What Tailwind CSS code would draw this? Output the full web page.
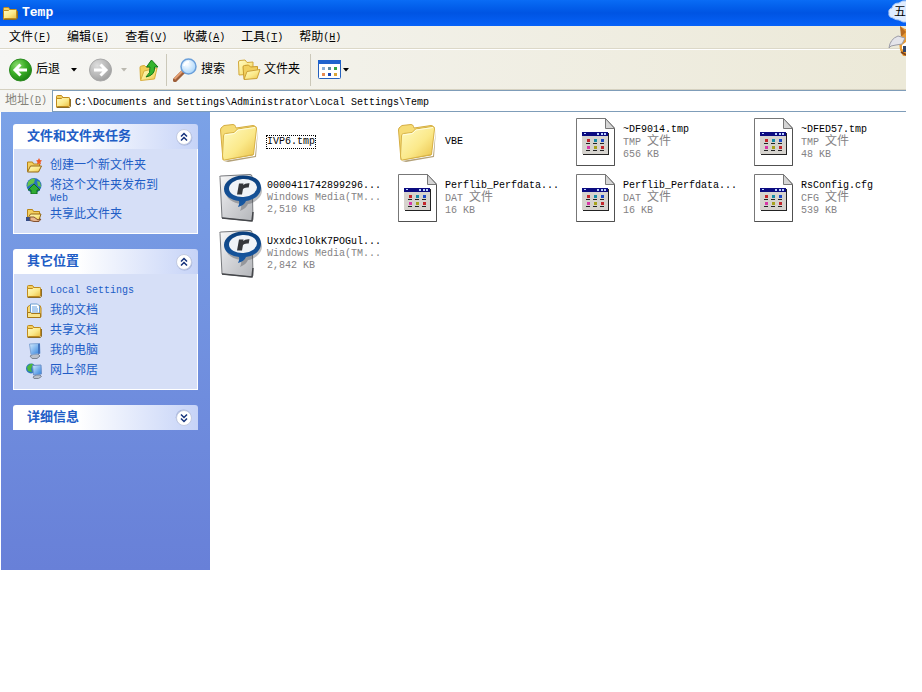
<!DOCTYPE html>
<html lang="zh-CN">
<head>
<meta charset="utf-8">
<meta name="viewport" content="width=device-width, initial-scale=1">
<title>Temp</title>
<script src="https://cdn.jsdelivr.net/npm/@tailwindcss/browser@4"></script>
</head>
<body class="min-h-screen bg-white pr-4 font-['Liberation_Mono','Noto_Sans_CJK_SC',monospace] text-[12px] leading-3 text-black">

<svg class="absolute size-0" aria-hidden="true">
  <defs>
    <linearGradient id="gFolder" x1="0" y1="0" x2="1" y2="1"><stop offset="0" stop-color="#fffbc4"/><stop offset=".55" stop-color="#fbe98a"/><stop offset="1" stop-color="#e9bf45"/></linearGradient>
    <linearGradient id="gPage" x1="0" y1="0" x2="1" y2="1"><stop offset="0" stop-color="#fafafa"/><stop offset=".4" stop-color="#d8d9dc"/><stop offset="1" stop-color="#b4b6ba"/></linearGradient>
    <radialGradient id="gGreen" cx=".35" cy=".3" r=".8"><stop offset="0" stop-color="#8ddc70"/><stop offset=".5" stop-color="#3aad26"/><stop offset="1" stop-color="#167a10"/></radialGradient>
    <radialGradient id="gGrey" cx=".35" cy=".3" r=".8"><stop offset="0" stop-color="#dedede"/><stop offset=".6" stop-color="#b5b5b5"/><stop offset="1" stop-color="#989898"/></radialGradient>
    <radialGradient id="gLens" cx=".4" cy=".35" r=".7"><stop offset="0" stop-color="#fff"/><stop offset="1" stop-color="#a3d3fb"/></radialGradient>
    <linearGradient id="gRing" x1="0" y1="0" x2="0" y2="1"><stop offset="0" stop-color="#0b3f7c"/><stop offset="1" stop-color="#1a5ba6"/></linearGradient>
    <linearGradient id="gScreen" x1="0" y1="0" x2="1" y2="1"><stop offset="0" stop-color="#d5ecff"/><stop offset="1" stop-color="#2b7fdc"/></linearGradient>

    <symbol id="folder16" viewBox="0 0 16 16">
      <path d="M1.500 14.500V3.500q0-1 1-1h4l1.500 2h5.500q1 0 1 1v2" fill="#f3cf60" stroke="#c08a1c"/>
      <path d="M2 14.500h12.500l1-1V6" fill="none" stroke="#8a6c2a"/>
      <path d="M1.500 5.500h5l1-1h6q1 0 1 1v7.500q0 .5-1 .5h-11q-1 0-1-1z" fill="url(#gFolder)" stroke="#c08a1c"/>
    </symbol>
    <symbol id="bigFolder" viewBox="0 0 44 48">
      <path d="M5 43l31-5 3-27-2 28-28 5z" fill="#806220" opacity=".6"/>
      <path d="M1.500 12L2 10 5 7.500l9-1q2 0 2.500 2l.5 1.500 17-2.500q2.500 0 2.500 2L34 37 4 42z" fill="#f6dc76" stroke="#d5ad42"/>
      <path d="M4.500 18q0-2 2-2.500l8.500-1 3.500-3.500 17-2.500q2.500 0 2 2.500L34.500 36.500 5.500 42q-2-.5-2-4z" fill="url(#gFolder)" stroke="#d7b246"/>
      <path d="M5.500 17l10-1.500L19 12l17-2.500" fill="none" stroke="#fffde0"/>
    </symbol>
    <symbol id="doc" viewBox="0 0 44 48">
      <path d="M1.500.5h29l9 9.500v37.500h-38z" fill="#fff" stroke="#777"/>
      <path d="M39.500 10v37.500h-38" fill="none" stroke="#505050"/>
      <path d="M30.500.5v10h9z" fill="#d5d5d5" stroke="#777"/>
      <path d="M8 15h26v22H8z" fill="#222"/>
      <path d="M7 14h26v22H7z" fill="#d6d3ce"/>
      <path d="M7 14h26v4H7z" fill="#0b0b80"/>
      <path d="M22 15h2v2h-2zM26 15h2v2h-2zM29 15h2v2h-2zM9 15h2v1H9z" fill="#bcd2ff"/>
      <path d="M11 25.500h4M18 25.500h4M25 25.500h4M11 32.500h4M18 32.500h4M25 32.500h4" stroke="#222"/>
      <path d="M12 21h3v3h-3zM26 28h3v3h-3z" fill="#c3262b"/><path d="M19 21h3v3h-3z" fill="#168ba5"/><path d="M26 21h3v3h-3z" fill="#1a49c8"/><path d="M12 28h3v3h-3z" fill="#d837a7"/><path d="M19 28h3v3h-3z" fill="#a6a21d"/>
    </symbol>
    <symbol id="media" viewBox="0 0 44 48">
      <path d="M1 3.500Q0 2 2 2L31 .5q2 0 2 2L34 45q0 2-2 2L3 44z" fill="url(#gPage)" stroke="#77797d"/>
      <path d="M3 44l30 3 1-9" fill="none" stroke="#45474b" stroke-width="1.500"/>
      <path d="M24 2.500C35 2 42 7 42 14.500S34 27 28 28c-1 3-4 5-8 7 1-2 1.500-4 1-7C13 27 6 23 6 16S13 3 24 2.500z" fill="#3b3f46" opacity=".35" transform="translate(1 2)"/>
      <path d="M24 1.500C35 1.500 42 6 42 13.500S35 26 27 27c-1 3-4 5-8 6 1-2 1.500-3.500 1-6C12 26 5 22 5 15S13 1.500 24 1.500z" fill="url(#gRing)"/>
      <ellipse cx="24" cy="14" rx="14" ry="9" fill="#f0f3f7" transform="rotate(-4 24 14)"/>
      <path d="M18 20.500l2-11h4.500l-.3 1.500Q26 9 30.500 9.300l-.8 4.200q-4.500-.5-5.700 1.500l-1 5.500z" fill="#35373b"/>
    </symbol>
    <symbol id="chev" viewBox="0 0 18 18">
      <circle cx="9.500" cy="9.800" r="7.800" fill="#7d8fc0" opacity=".5"/>
      <circle cx="9" cy="9" r="7.500" fill="#fff" stroke="#c3cbe2"/>
      <path d="M6 8.500l3-3 3 3M6 12.500l3-3 3 3" fill="none" stroke="#16337c" stroke-width="1.500"/>
    </symbol>
  </defs>
</svg>

<div class="relative overflow-hidden">
  <header>
    <div class="flex h-[26px] items-center gap-1 bg-linear-to-b from-[#0a6cf5] via-[#0054e3] to-[#0762f8] pl-[2px] text-white">
      <svg class="size-4"><use href="#folder16"/></svg>
      <h1 class="text-[13px] font-bold leading-4">Temp</h1>
    </div>
    <div class="bg-linear-to-r from-[#f6f6f4] to-[#ece9d8]">
      <nav aria-label="菜单" class="flex h-[23px] items-center gap-4 border-b border-[#dcd8c8] pl-[9px] pt-[2px]">
        <button type="button" class="flex items-center">文件<span class="text-[10px]">(<u>F</u>)</span></button>
        <button type="button" class="flex items-center">编辑<span class="text-[10px]">(<u>E</u>)</span></button>
        <button type="button" class="flex items-center">查看<span class="text-[10px]">(<u>V</u>)</span></button>
        <button type="button" class="flex items-center">收藏<span class="text-[10px]">(<u>A</u>)</span></button>
        <button type="button" class="flex items-center">工具<span class="text-[10px]">(<u>T</u>)</span></button>
        <button type="button" class="flex items-center">帮助<span class="text-[10px]">(<u>H</u>)</span></button>
      </nav>
      <div role="toolbar" aria-label="标准按钮" class="flex h-10 items-center border-t border-white pl-2">
        <button type="button" class="flex items-center gap-1">
          <svg class="size-6" viewBox="0 0 24 24"><circle cx="12.500" cy="12" r="11" fill="url(#gGreen)" stroke="#2d8a22"/><path d="M19 12H8M12.500 6.500L7 12l5.500 5.500" fill="none" stroke="#fff" stroke-width="3"/></svg>
          <span>后退</span>
        </button>
        <button type="button" aria-label="后退历史" class="flex w-[28px] justify-center"><svg class="h-1 w-2" viewBox="0 0 8 4"><path d="M1 0h6L4 3.500z"/></svg></button>
        <button type="button" aria-label="前进" disabled><svg class="size-6" viewBox="0 0 24 24"><circle cx="12.500" cy="12" r="11" fill="url(#gGrey)" stroke="#a9a9a9"/><path d="M6 12h11M12.500 6.500L18 12l-5.500 5.500" fill="none" stroke="#fff" stroke-width="3"/></svg></button>
        <button type="button" aria-label="前进历史" disabled class="flex w-6 justify-center"><svg class="h-1 w-2" viewBox="0 0 8 4"><path d="M1 0h6L4 3.500z" fill="#bbb9b0"/></svg></button>
        <button type="button" aria-label="向上" class="pl-px">
          <svg class="size-6" viewBox="0 0 24 24"><path d="M3.500 21.500l-.5-12q0-1.500 1.500-1.500l3-.5 2 2 7-1 .5 10z" fill="#f2cf58" stroke="#d5a832"/><path d="M3.500 22.500L7 13l13-3-2.500 11z" fill="url(#gFolder)" stroke="#d9ae3d"/><path d="M9 19q5-4 4-10H9.500L14.500 2l6.500 7h-3.500q1 8-8.500 10z" fill="#35b52e" stroke="#15781a"/></svg>
        </button>
        <span class="ml-[5px] mr-[6px] h-8 w-px bg-[#cbc8b9]"></span>
        <button type="button" class="flex items-center gap-1">
          <svg class="size-6" viewBox="0 0 24 24"><path d="M2 22l8-8" stroke="#9e5f3a" stroke-width="4.500" stroke-linecap="round"/><path d="M1.500 21l8-8" stroke="#e49e70" stroke-width="2"/><circle cx="15.500" cy="8.500" r="7.500" fill="url(#gLens)" stroke="#6b9fd9" stroke-width="1.500"/><path d="M11 8q1-4 5-4" fill="none" stroke="#fff" stroke-width="2"/></svg>
          <span>搜索</span>
        </button>
        <button type="button" class="ml-3 flex items-center gap-[3px]">
          <svg class="size-6" viewBox="0 0 24 24"><path d="M2 17L1.500 4q0-1.500 1.500-1.500l5-.5 2 2.500 6-.5V16z" fill="url(#gFolder)" stroke="#d2a83b"/><path d="M7 21L6 9q0-1.500 1.500-1.500l4-.5 2 2 7-.5V11l-2 9z" fill="#f1cf5d" stroke="#c99b2c"/><path d="M7 21.500l3-8 13-2-3 9z" fill="url(#gFolder)" stroke="#cda136"/></svg>
          <span>文件夹</span>
        </button>
        <span class="ml-[10px] mr-[7px] h-8 w-px bg-[#cbc8b9]"></span>
        <button type="button" aria-label="查看方式" class="flex items-center">
          <svg class="h-5 w-6" viewBox="0 0 24 20"><rect x=".5" y=".5" width="22" height="18" rx="1" fill="#fff" stroke="#2460bd"/><path d="M0 0h23v4H0z" fill="#1f63cd"/><path d="M4 7h3v3H4z" fill="#8ab0d8"/><path d="M10 7h3v3h-3z" fill="#608da2"/><path d="M16 7h3v3h-3z" fill="#34a542"/><path d="M4 13h3v3H4z" fill="#e68a51"/><path d="M10 13h3v3h-3z" fill="#1946b5"/><path d="M16 13h3v3h-3z" fill="#dba638"/></svg>
          <svg class="h-1 w-2" viewBox="0 0 8 4"><path d="M1 0h6L4 3.500z"/></svg>
        </button>
      </div>
      <form class="flex h-[23px] items-stretch border-t border-[#d5d1c0] pl-[5px]" onsubmit="return false">
        <label for="address" class="flex w-[47px] items-center text-[#858379]">地址<span class="text-[10px]">(<u>D</u>)</span></label>
        <div class="flex flex-1 items-center gap-1 border border-r-0 border-[#7f9db9] bg-white pl-[2px]">
          <svg class="size-4"><use href="#folder16"/></svg>
          <input id="address" type="text" class="min-w-0 flex-1 bg-transparent pt-[3px] text-[10px] leading-3 outline-none" value="C:\Documents and Settings\Administrator\Local Settings\Temp">
        </div>
      </form>
    </div>
  </header>

  <div class="absolute right-0 top-0 h-14 w-[18px] overflow-hidden">
    <svg class="absolute inset-0 h-14 w-[30px]" viewBox="0 0 30 56" aria-hidden="true">
      <path d="M5 18Q0 17 1 13q-1-4 3-5 1-5 7-5 3-3 8-2h11v21H15l-4-2q-4 0-6-2z" fill="#dfecff" stroke="#a4c4f4"/>
      <path d="M12 26l5 3h13v27H15l-3-6-1-8 3-5z" fill="#e99b34"/><path d="M12 26l6 6-5 5z" fill="#b96c22"/>
      <path d="M1 48q1-9 9-12l7 2-3 6-6 1-5 1z" fill="#e4e4ea" stroke="#9b9ba6"/>
      <path d="M14 45l4-3v9l-4-2z" fill="#fff"/><path d="M15 46h3v6h-3z" fill="#2f466d"/><path d="M13 52l5 3" stroke="#7d421a" stroke-width="2"/>
    </svg>
    <span class="absolute left-[6px] top-[7px]">五</span>
  </div>

  <div class="flex items-start">
    <aside class="ml-px flex min-h-[458px] w-[209px] shrink-0 flex-col gap-[15px] bg-linear-to-b from-[#7ba2e7] to-[#6880d8] px-3 pt-3 text-[#215dc6]">
      <section>
        <h2 class="flex h-[25px] items-center justify-between rounded-t-[3px] bg-linear-to-r from-white from-35% to-[#c6d3f7] pl-[14px] pr-[5px] text-[13px] font-bold">文件和文件夹任务<button type="button" aria-label="折叠"><svg class="size-[18px]"><use href="#chev"/></svg></button></h2>
        <ul class="flex flex-col gap-2 border border-t-0 border-white bg-[#d6dff7] px-3 pb-3 pt-[11px]">
          <li><a href="#" class="flex gap-2"><svg class="-my-[2px] size-4 shrink-0" viewBox="0 0 16 16"><path d="M1.500 13V4h5l1 2h6v3" fill="#f3cf60" stroke="#b98417"/><path d="M1.500 14l3-6h11l-3 6z" fill="url(#gFolder)" stroke="#946817"/><path d="M13 0l1 2 2 .5-1.500 1.500.5 2.500-2-1-2 1 .5-2.500L10 2.500l2-.5z" fill="#ee5a24"/></svg>创建一个新文件夹</a></li>
          <li><a href="#" class="flex gap-2"><svg class="-my-[2px] size-4 shrink-0" viewBox="0 0 16 16"><circle cx="8" cy="7.500" r="7.500" fill="#2771bd"/><path d="M2 4q4-5 7-3l-1 4-4 2-3 2zM11 3l3 1 1 5-3-1z" fill="#64c34a"/><path d="M8 6l6 6h-3v4H5v-4H2z" fill="#2fac34" stroke="#126b1e"/></svg><span>将这个文件夹发布到<br><span class="text-[10px]">Web</span></span></a></li>
          <li class="-mt-1"><a href="#" class="flex gap-2"><svg class="-my-[2px] size-4 shrink-0" viewBox="0 0 16 16"><path d="M1.500 12V2.500h5l1 2h6v3" fill="#f3cf60" stroke="#b98417"/><path d="M1.500 12l3-5h10.500l-2 6z" fill="url(#gFolder)" stroke="#946817"/><path d="M0 10h4v4H0z" fill="#354c86"/><path d="M4 10l4 0 4 3 3-1-2 2.500H8l-4-1z" fill="#e9b78e" stroke="#845230"/></svg>共享此文件夹</a></li>
        </ul>
      </section>
      <section>
        <h2 class="flex h-[25px] items-center justify-between rounded-t-[3px] bg-linear-to-r from-white from-35% to-[#c6d3f7] pl-[14px] pr-[5px] text-[13px] font-bold">其它位置<button type="button" aria-label="折叠"><svg class="size-[18px]"><use href="#chev"/></svg></button></h2>
        <ul class="flex flex-col gap-2 border border-t-0 border-white bg-[#d6dff7] px-3 pb-3 pt-[11px]">
          <li><a href="#" class="flex gap-2"><svg class="-my-[2px] size-4 shrink-0"><use href="#folder16"/></svg><span class="text-[10px]">Local Settings</span></a></li>
          <li><a href="#" class="flex gap-2"><svg class="-my-[2px] size-4 shrink-0" viewBox="0 0 16 16"><path d="M1.500 14V4l2-1.500H14L15 5v8.500l-1 1z" fill="#f5d773" stroke="#b98417"/><path d="M4.500 1h7l2 2v7h-9z" fill="#fff" stroke="#6d9ed0"/><path d="M6 4h5M6 6h6M6 8h6" stroke="#5b9be0"/><path d="M1.500 9.500h3l1 1h9v4h-13z" fill="#f9e48c" stroke="#a57718"/></svg>我的文档</a></li>
          <li><a href="#" class="flex gap-2"><svg class="-my-[2px] size-4 shrink-0"><use href="#folder16"/></svg>共享文档</a></li>
          <li><a href="#" class="flex gap-2"><svg class="-my-[2px] size-4 shrink-0" viewBox="0 0 16 16"><path d="M4 13l4-2h4l2 2-3 2.500H6z" fill="#b9c0cb" stroke="#7c8594"/><path d="M3.500 1l10-.5.5 10-9 1z" fill="url(#gScreen)" stroke="#83a6d6"/><path d="M12 1l2-.5v10l-2 .5z" fill="#4473bd"/></svg>我的电脑</a></li>
          <li><a href="#" class="flex gap-2"><svg class="-my-[2px] size-4 shrink-0" viewBox="0 0 16 16"><circle cx="5" cy="5.500" r="5" fill="#2d79bd"/><path d="M1 4q3-4 6-3L5 6l1 3-4-1z" fill="#4bb83e"/><path d="M7 14l3-2h4l1.500 1.500-3 2H8z" fill="#b9c0cb" stroke="#7c8594"/><path d="M6.500 2.500l8.500-.5.5 9-8 1z" fill="url(#gScreen)" stroke="#6d91c9"/></svg>网上邻居</a></li>
        </ul>
      </section>
      <section>
        <h2 class="flex h-[25px] items-center justify-between rounded-t-[3px] bg-linear-to-r from-white from-35% to-[#c6d3f7] pl-[14px] pr-[5px] text-[13px] font-bold">详细信息<button type="button" aria-label="展开"><svg class="size-[18px] rotate-180"><use href="#chev"/></svg></button></h2>
      </section>
    </aside>

    <main class="min-w-0 flex-1 overflow-hidden pl-[9px] pt-[6px]">
      <ul class="grid grid-cols-[repeat(4,178px)] gap-y-2 text-[10px] text-[#848284]">
        <li class="flex h-12 items-center gap-1"><svg class="h-12 w-11"><use href="#bigFolder"/></svg><p class="text-black outline-1 outline-dotted outline-black">IVP6.tmp</p></li>
        <li class="flex h-12 items-center gap-1"><svg class="h-12 w-11"><use href="#bigFolder"/></svg><p class="text-black">VBE</p></li>
        <li class="flex h-12 items-center gap-1"><svg class="h-12 w-11"><use href="#doc"/></svg><div><p class="text-black">~DF9014.tmp</p><p>TMP <span class="text-[12px] leading-3">文件</span></p><p>656 KB</p></div></li>
        <li class="flex h-12 items-center gap-1"><svg class="h-12 w-11"><use href="#doc"/></svg><div><p class="text-black">~DFED57.tmp</p><p>TMP <span class="text-[12px] leading-3">文件</span></p><p>48 KB</p></div></li>
        <li class="flex h-12 items-center gap-1"><svg class="h-12 w-11"><use href="#media"/></svg><div><p class="text-black">0000411742899296...</p><p>Windows Media(TM...</p><p>2,510 KB</p></div></li>
        <li class="flex h-12 items-center gap-1"><svg class="h-12 w-11"><use href="#doc"/></svg><div><p class="text-black">Perflib_Perfdata...</p><p>DAT <span class="text-[12px] leading-3">文件</span></p><p>16 KB</p></div></li>
        <li class="flex h-12 items-center gap-1"><svg class="h-12 w-11"><use href="#doc"/></svg><div><p class="text-black">Perflib_Perfdata...</p><p>DAT <span class="text-[12px] leading-3">文件</span></p><p>16 KB</p></div></li>
        <li class="flex h-12 items-center gap-1"><svg class="h-12 w-11"><use href="#doc"/></svg><div><p class="text-black">RsConfig.cfg</p><p>CFG <span class="text-[12px] leading-3">文件</span></p><p>539 KB</p></div></li>
        <li class="flex h-12 items-center gap-1"><svg class="h-12 w-11"><use href="#media"/></svg><div><p class="text-black">UxxdcJlOkK7POGul...</p><p>Windows Media(TM...</p><p>2,842 KB</p></div></li>
      </ul>
    </main>
  </div>
</div>
</body>
</html>
